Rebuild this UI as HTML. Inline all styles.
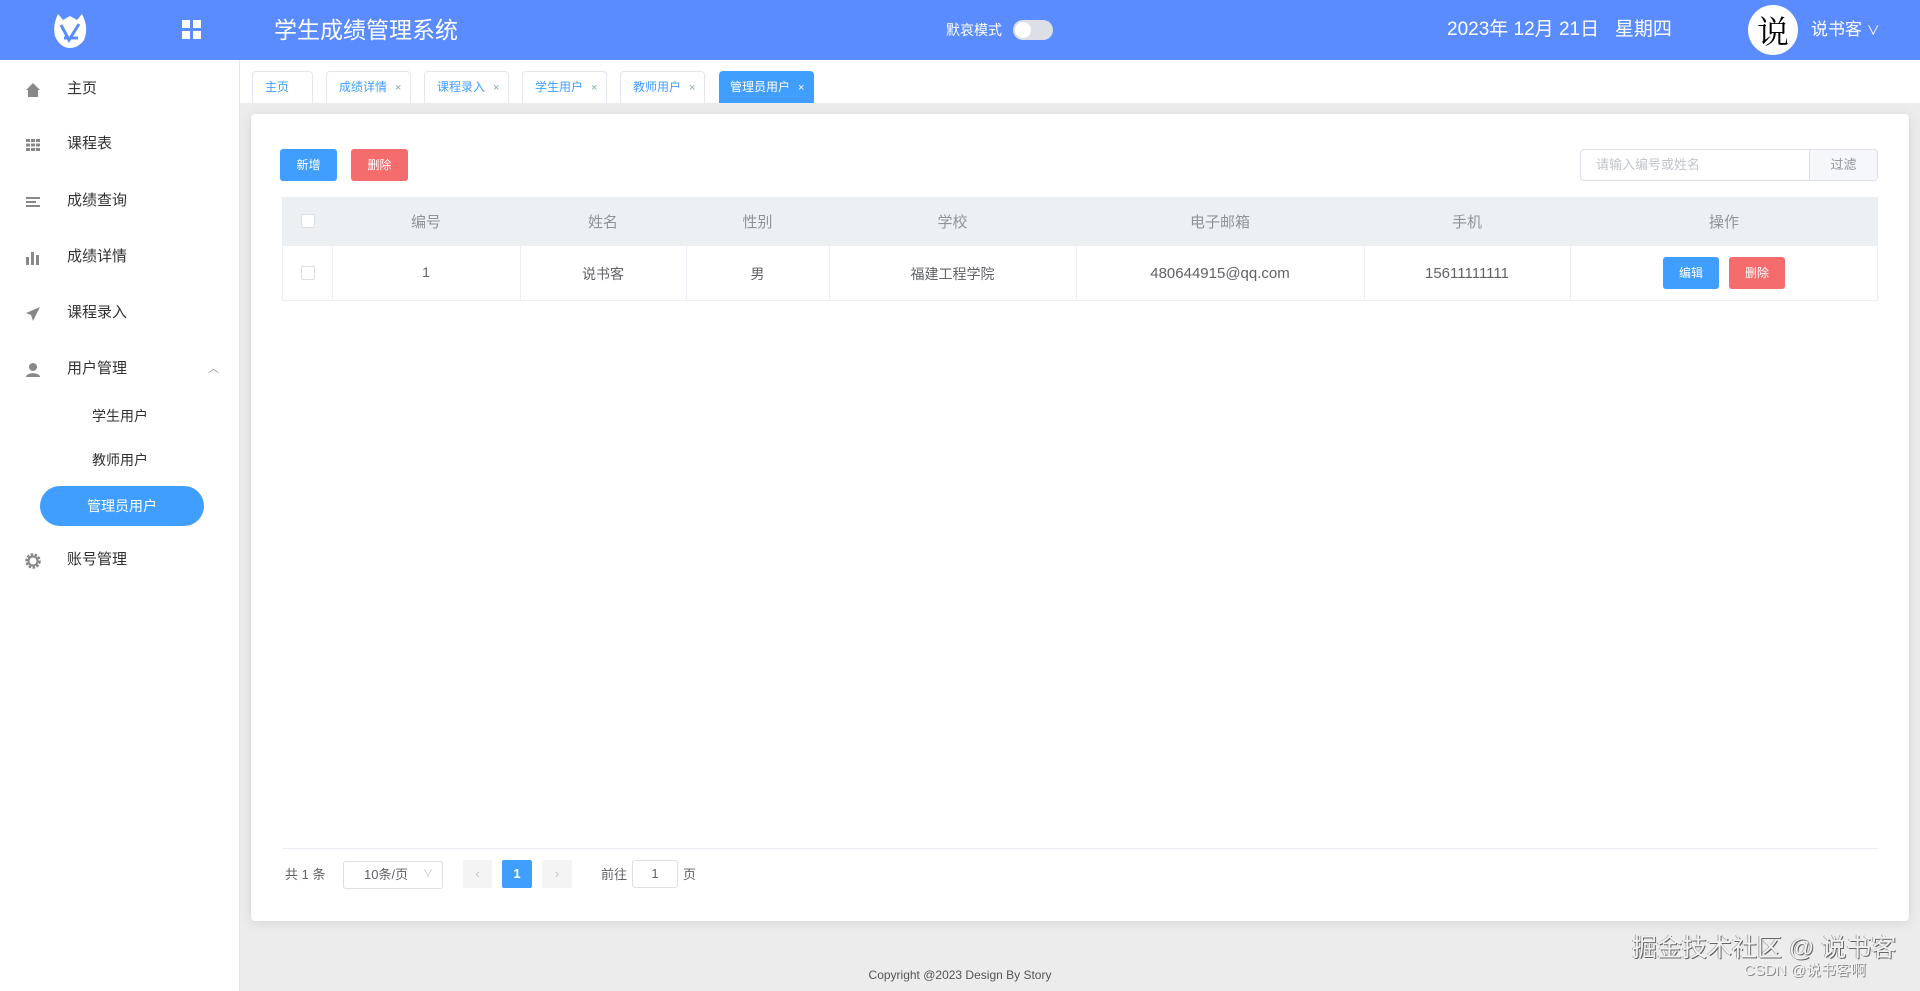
<!DOCTYPE html>
<html><head><meta charset="utf-8"><style>
*{box-sizing:border-box;margin:0;padding:0}
body{width:1920px;height:991px;overflow:hidden;background:#ececec;font-family:"Liberation Sans","Noto Sans CJK SC",sans-serif;position:relative;color:#606266}
.abs{position:absolute}
#hdr{left:0;top:0;width:1920px;height:60px;background:#5b8cff;color:#fff}
#side{left:0;top:60px;width:240px;height:931px;background:#fff;border-right:1px solid #e6e6e6}
.mi{position:absolute;left:0;width:240px;height:30px;line-height:30px;font-size:15px;color:#303133}
.mi span{position:absolute;left:67px}
.mi svg{position:absolute;left:25px;top:8px}
.sub{position:absolute;left:92px;font-size:14px;color:#303133;line-height:20px}
#tabs{left:240px;top:60px;width:1680px;height:43px;background:#fff}
.tab{position:absolute;top:11px;height:32px;border:1px solid #e4e7ed;border-bottom:none;border-radius:4px 4px 0 0;font-size:12px;color:#409eff;line-height:30px;padding-left:12px;background:#fff}
.tab i{font-style:normal;font-size:11px;color:#8aa;margin-left:8px}
.tab.act{background:#409eff;color:#fff;border-color:#409eff}
.tab.act i{color:#fff}
#card{left:251px;top:114px;width:1658px;height:807px;background:#fff;border-radius:4px;box-shadow:0 2px 12px rgba(0,0,0,.1)}
.btn{position:absolute;height:32px;border-radius:3px;color:#fff;font-size:12px;text-align:center;line-height:32px}
.th,.td{position:absolute;text-align:center;font-size:15px}
.vl{position:absolute;width:1px;background:#ebeef5}
.cb{position:absolute;width:14px;height:14px;border:1px solid #dcdfe6;border-radius:2px;background:#fff}
</style></head><body>
<div id="hdr" class="abs">
  <svg class="abs" style="left:50px;top:10px" width="40" height="40" viewBox="0 0 40 40"><path d="M8 4 L13 10 L20 6 L27 10 L32 4 C36 12 38 20 34 30 C30 36 24 38 20 38 C14 38 8 34 5 26 C3 18 5 10 8 4Z" fill="#fff"/><path d="M11 15 L19 30 L29 14 M14 28 L28 28" stroke="#5b8cff" stroke-width="3" fill="none"/></svg>
  <svg class="abs" style="left:182px;top:20px" width="20" height="20"><rect x="0" y="0" width="8" height="8" fill="#fff"/><rect x="11" y="0" width="8" height="8" fill="#fff"/><rect x="0" y="11" width="8" height="8" fill="#fff"/><rect x="11" y="11" width="8" height="8" fill="#fff"/></svg>
  <div class="abs" style="left:274px;top:15px;font-size:23px;line-height:30px">学生成绩管理系统</div>
  <div class="abs" style="left:946px;top:21px;font-size:14px;line-height:18px">默哀模式</div>
  <div class="abs" style="left:1013px;top:20px;width:40px;height:20px;border-radius:10px;background:#dcdfe6"><div class="abs" style="left:2px;top:2px;width:16px;height:16px;border-radius:8px;background:#fff"></div></div>
  <div class="abs" style="left:1447px;top:18px;font-size:19px;line-height:24px">2023年 12月 21日&nbsp;&nbsp; 星期四</div>
  <div class="abs" style="left:1748px;top:5px;width:50px;height:50px;border-radius:25px;background:#fff;color:#000;font-size:32px;line-height:50px;text-align:center;font-family:'Noto Serif CJK SC',serif">说</div>
  <div class="abs" style="left:1811px;top:19px;font-size:17px;line-height:22px">说书客 <span style="font-size:13px">∨</span></div>
</div>
<div id="side" class="abs">
  <div class="mi" style="top:14px"><svg width="16" height="16"><path d="M8 1 L15 8 L13 8 L13 15 L3 15 L3 8 L1 8Z" fill="#888"/></svg><span>主页</span></div>
  <div class="mi" style="top:69px"><svg width="16" height="16" fill="#888"><rect x="1" y="2" width="4" height="3"/><rect x="6" y="2" width="4" height="3"/><rect x="11" y="2" width="4" height="3"/><rect x="1" y="6.5" width="4" height="3"/><rect x="6" y="6.5" width="4" height="3"/><rect x="11" y="6.5" width="4" height="3"/><rect x="1" y="11" width="4" height="3"/><rect x="6" y="11" width="4" height="3"/><rect x="11" y="11" width="4" height="3"/></svg><span>课程表</span></div>
  <div class="mi" style="top:126px"><svg width="16" height="16" fill="#888"><rect x="1" y="3" width="14" height="2"/><rect x="1" y="7" width="10" height="2"/><rect x="1" y="11" width="14" height="2"/></svg><span>成绩查询</span></div>
  <div class="mi" style="top:182px"><svg width="16" height="16" fill="#888"><rect x="1" y="7" width="3" height="8"/><rect x="6" y="2" width="3" height="13"/><rect x="11" y="5" width="3" height="10"/></svg><span>成绩详情</span></div>
  <div class="mi" style="top:238px"><svg width="16" height="16"><path d="M15 1 L1 7 L6 9 L8 15 Z" fill="#888"/></svg><span>课程录入</span></div>
  <div class="mi" style="top:294px"><svg width="16" height="16" fill="#888"><circle cx="8" cy="5" r="4"/><path d="M1 15 C1 10 15 10 15 15Z"/></svg><span>用户管理</span><span style="left:208px;color:#999;font-size:11px">︿</span></div>
  <div class="sub" style="top:346px">学生用户</div>
  <div class="sub" style="top:390px">教师用户</div>
  <div class="abs" style="left:40px;top:426px;width:164px;height:40px;border-radius:20px;background:#409eff;color:#fff;font-size:14px;line-height:40px;text-align:center">管理员用户</div>
  <div class="mi" style="top:485px"><svg width="16" height="16"><circle cx="8" cy="8" r="6" fill="none" stroke="#888" stroke-width="3.5" stroke-dasharray="2.4 1.3"/><circle cx="8" cy="8" r="4.5" fill="none" stroke="#888" stroke-width="2"/></svg><span>账号管理</span></div>
</div>
<div id="tabs" class="abs">
  <div class="tab" style="left:12px;width:61px">主页</div>
  <div class="tab" style="left:86px;width:85px">成绩详情<i>×</i></div>
  <div class="tab" style="left:184px;width:85px">课程录入<i>×</i></div>
  <div class="tab" style="left:282px;width:85px">学生用户<i>×</i></div>
  <div class="tab" style="left:380px;width:85px">教师用户<i>×</i></div>
  <div class="tab act" style="left:479px;width:95px;padding-left:10px">管理员用户<i>×</i></div>
</div>
<div id="card" class="abs">
  <div class="btn" style="left:29px;top:35px;width:57px;background:#409eff">新增</div>
  <div class="btn" style="left:100px;top:35px;width:57px;background:#f56c6c">删除</div>
  <div class="abs" style="left:1329px;top:35px;width:298px;height:32px;border:1px solid #dcdfe6;border-radius:4px"></div>
  <div class="abs" style="left:1345px;top:35px;font-size:13px;line-height:32px;color:#c0c4cc">请输入编号或姓名</div>
  <div class="abs" style="left:1558px;top:36px;width:68px;height:30px;background:#f5f7fa;border-left:1px solid #dcdfe6;border-radius:0 4px 4px 0;font-size:13px;text-align:center;line-height:30px;color:#909399">过滤</div>
  <div class="abs" style="left:31px;top:83px;width:1596px;height:104px;border:1px solid #ebeef5"></div>
  <div class="abs" style="left:32px;top:84px;width:1594px;height:47px;background:#edf0f3"></div>
  <div class="abs" style="left:32px;top:131px;width:1594px;height:1px;background:#ebeef5"></div>
  <div class="vl" style="left:81px;top:84px;height:103px"></div>
  <div class="vl" style="left:269px;top:84px;height:103px"></div>
  <div class="vl" style="left:435px;top:84px;height:103px"></div>
  <div class="vl" style="left:578px;top:84px;height:103px"></div>
  <div class="vl" style="left:825px;top:84px;height:103px"></div>
  <div class="vl" style="left:1113px;top:84px;height:103px"></div>
  <div class="vl" style="left:1319px;top:84px;height:103px"></div>
  <div class="cb" style="left:50px;top:100px"></div>
  <div class="cb" style="left:50px;top:152px"></div>
  <div class="th" style="left:81px;width:188px;top:97px;color:#909399">编号</div>
  <div class="th" style="left:269px;width:166px;top:97px;color:#909399">姓名</div>
  <div class="th" style="left:435px;width:143px;top:97px;color:#909399">性别</div>
  <div class="th" style="left:578px;width:247px;top:97px;color:#909399">学校</div>
  <div class="th" style="left:825px;width:288px;top:97px;color:#909399">电子邮箱</div>
  <div class="th" style="left:1113px;width:206px;top:97px;color:#909399">手机</div>
  <div class="th" style="left:1319px;width:308px;top:97px;color:#909399">操作</div>
  <div class="td" style="left:81px;width:188px;top:150px;font-size:14px">1</div>
  <div class="td" style="left:269px;width:166px;top:150px;font-size:14px">说书客</div>
  <div class="td" style="left:435px;width:143px;top:150px;font-size:14px">男</div>
  <div class="td" style="left:578px;width:247px;top:150px;font-size:14px">福建工程学院</div>
  <div class="td" style="left:825px;width:288px;top:151px">480644915@qq.com</div>
  <div class="td" style="left:1113px;width:206px;top:151px">15611111111</div>
  <div class="btn" style="left:1412px;top:143px;width:56px;background:#409eff">编辑</div>
  <div class="btn" style="left:1478px;top:143px;width:56px;background:#f56c6c">删除</div>
  <div class="abs" style="left:31px;top:734px;width:1596px;height:1px;background:#ebeef5"></div>
  <div class="abs" style="left:34px;top:750px;font-size:13px;line-height:22px">共 1 条</div>
  <div class="abs" style="left:92px;top:747px;width:100px;height:28px;border:1px solid #dcdfe6;border-radius:3px;font-size:13px;line-height:26px;padding-left:20px">10条/页<span style="position:absolute;right:9px;color:#c0c4cc;font-size:10px">∨</span></div>
  <div class="abs" style="left:212px;top:746px;width:29px;height:28px;background:#f4f4f5;border-radius:2px;text-align:center;line-height:28px;color:#c0c4cc;font-size:13px">‹</div>
  <div class="abs" style="left:251px;top:746px;width:30px;height:28px;background:#409eff;border-radius:2px;text-align:center;line-height:28px;color:#fff;font-size:13px;font-weight:bold">1</div>
  <div class="abs" style="left:291px;top:746px;width:30px;height:28px;background:#f4f4f5;border-radius:2px;text-align:center;line-height:28px;color:#c0c4cc;font-size:13px">›</div>
  <div class="abs" style="left:350px;top:750px;font-size:13px;line-height:22px">前往</div>
  <div class="abs" style="left:381px;top:746px;width:46px;height:28px;border:1px solid #dcdfe6;border-radius:3px;text-align:center;line-height:26px;font-size:13px">1</div>
  <div class="abs" style="left:432px;top:750px;font-size:13px;line-height:22px">页</div>
</div>
<div class="abs" style="left:0;width:1920px;top:968px;text-align:center;font-size:12px;color:#555">Copyright @2023 Design By Story</div>
<div class="abs" style="left:1632px;top:933px;font-size:25px;color:#f2f2f2;text-shadow:1px 1px 0 #666,-1px 0 0 #aaa;line-height:30px">掘金技术社区 @ 说书客</div>
<div class="abs" style="left:1744px;top:962px;font-size:15px;color:#f2f2f2;text-shadow:1px 1px 0 #888;line-height:18px">CSDN @说书客啊</div>
</body></html>
